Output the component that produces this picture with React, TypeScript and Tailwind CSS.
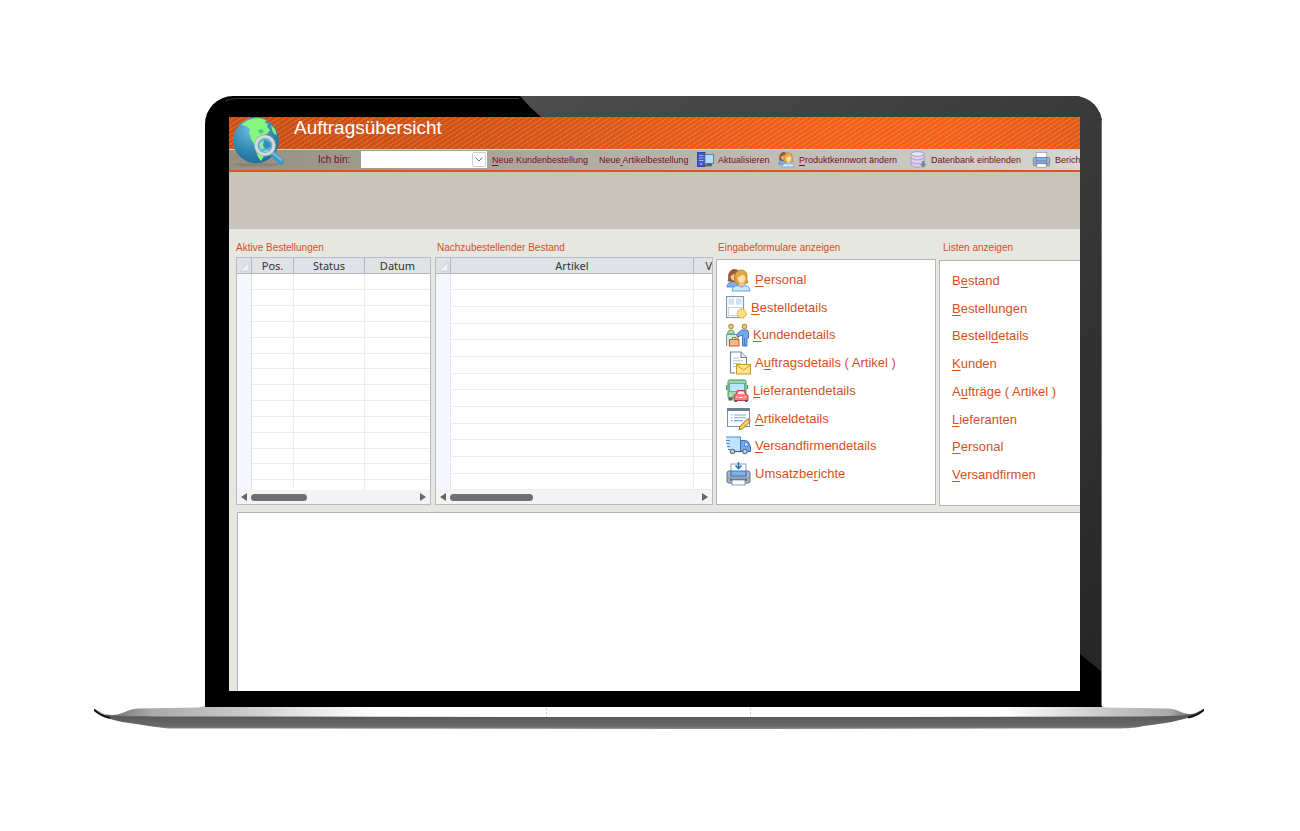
import type { ReactNode } from "react";

// Der unterstrichene Buchstabe steht zwischen zwei Tilden, z. B. "~P~ersonal"
function Hotkey({ text }: { text: string }) {
  const [before, key, after] = text.split("~");
  return (
    <span className="whitespace-pre">
      {before}
      <span className="underline underline-offset-2">{key}</span>
      {after}
    </span>
  );
}

/* ---------- Icons ---------- */

function GlobeIcon() {
  return (
    <svg viewBox="0 0 54 50" className="h-[50px] w-[54px]">
      <defs>
        <radialGradient id="sea" cx="0.4" cy="0.25" r="0.8">
          <stop offset="0" stopColor="#6cc0de" />
          <stop offset="0.6" stopColor="#3187b0" />
          <stop offset="1" stopColor="#1f6a94" />
        </radialGradient>
      </defs>
      <ellipse cx="26" cy="47.500" rx="25" ry="2" fill="#77776b" opacity="0.45" />
      <circle cx="25" cy="23.500" r="22.800" fill="url(#sea)" />
      <path
        d="M10 8 L17 3 L23 1.500 L29 1 L35 3 L34 6 L37 7 L36 10 L39 13 L36 17 L33 18 L31 21 L27 22 L25 24 L26 28 L23 27 L20 22 L18 16 L19 12 L15 9 Z"
        fill="#85f77e"
      />
      <path d="M40 8 L44 12 L46 18 L43 17 L41 13 Z" fill="#7ff08a" />
      <path d="M26 30 L31 34 L33 39 L30 44 L27 40 L25 34 Z" fill="#85f77e" />
      <path d="M27 13 l4 -1 l2 3 l-4 2 z" fill="#4fbf95" />
      <path d="M42 37 L50 45" stroke="#3b97c4" strokeWidth="6" strokeLinecap="round" />
      <path d="M42 36 L50 43" stroke="#73c3e6" strokeWidth="2" strokeLinecap="round" />
      <circle cx="34" cy="28.500" r="9" fill="#5fb0cf" stroke="#d5d9dc" strokeWidth="3.200" />
      <circle cx="34" cy="28.500" r="10.700" fill="none" stroke="#98a3a9" strokeWidth="0.600" />
      <path d="M28 27 q3 -4 7 -3 l-3 3 l1 4 l-3 2 z M32 34.500 l6 -2 l-2 3 z" fill="#8ce9a0" />
      <path d="M33 23 q6 1 7 6 l-4 3 l-4 -3 z" fill="#2e7fae" opacity="0.8" />
    </svg>
  );
}

function PeopleIcon({ className }: { className: string }) {
  return (
    <svg viewBox="0 0 25 24" className={className}>
      <path d="M1 19 q0 -5 6 -5.500 h5 v5.500 z" fill="#7fb0f2" stroke="#3f78c4" strokeWidth="0.800" />
      <path d="M2 13 Q3 10 2.500 7 Q4 1 9 1.500 Q14 2 14 8 L12 14 Z" fill="#9c5a3c" stroke="#74402a" strokeWidth="0.600" />
      <path d="M4.500 8 q3 -1 4 -3 v8 q-4 -1 -4 -5" fill="#f6c890" />
      <path d="M8.500 14 Q9.500 11 8.500 8 Q10 2 15.500 2 Q21 2.500 21 8 Q20.500 12 22 14.500 Q19 16.500 15.500 16.500 Q11 16.500 8.500 14 Z" fill="#e3ab45" stroke="#a8741c" strokeWidth="0.700" />
      <path d="M13 14 h5 v4 q-2.500 2 -5 0 z" fill="#f5c98d" />
      <path d="M11 9 Q15 8 16.500 6 Q18 8 20 8.500 Q20 15 15.500 15.500 Q11.500 15 11 9 Z" fill="#fde0ac" stroke="#c58a35" strokeWidth="0.600" />
      <path d="M6 23 q0 -5 6 -5.500 q3.500 3 7 0 q5 0.500 5 5.500 z" fill="#c5e8ff" stroke="#5b9bd0" strokeWidth="0.900" />
    </svg>
  );
}

function PrinterIcon({ className, arrow = false }: { className: string; arrow?: boolean }) {
  return (
    <svg viewBox="0 0 25 24" className={className}>
      <rect x="1" y="9" width="23" height="12" rx="2" fill="#a9b8c8" stroke="#5b7086" strokeWidth="1" />
      <path d="M1.500 16 h22" stroke="#6f8499" strokeWidth="0.800" />
      <rect x="5" y="2" width="15" height="12" fill="#fff" stroke="#8494a5" strokeWidth="0.900" />
      <rect x="5" y="9" width="15" height="5" fill="#7eb1f0" stroke="#3c6fb5" strokeWidth="0.900" />
      <rect x="4" y="17" width="17" height="2" fill="#51677d" />
      <rect x="6" y="18" width="13" height="5" fill="#fff" stroke="#8494a5" strokeWidth="0.900" />
      {arrow && <path d="M12.500 0 v6 M9.500 3.500 l3 3 l3 -3" fill="none" stroke="#2f6fc4" strokeWidth="1.600" />}
    </svg>
  );
}

function ComputerIcon() {
  return (
    <svg viewBox="0 0 17 15" className="h-[15px] w-[17px]">
      <rect x="0.500" y="0.500" width="7.500" height="14" fill="#4557c9" stroke="#3345ad" />
      <path d="M2 3.500 h4.500 M2 6 h4.500 M2 8.500 h4.500" stroke="#a9b7f5" strokeWidth="0.900" />
      <circle cx="4" cy="12" r="0.800" fill="#dfe5ff" />
      <rect x="8" y="2.500" width="8.500" height="9" fill="#b4dcfb" stroke="#5d83a3" />
      <path d="M10 12 h4 v1.500 h-6 v1" fill="none" stroke="#46606f" strokeWidth="1.500" />
    </svg>
  );
}

function DatabaseIcon() {
  return (
    <svg viewBox="0 0 17 17" className="h-[17px] w-[17px]">
      <path d="M1 3 v11 q6.500 4.500 13 0 v-11" fill="#ddd3f0" stroke="#a493c8" strokeWidth="0.900" />
      <ellipse cx="7.500" cy="3" rx="6.500" ry="2.300" fill="#ece5f9" stroke="#a493c8" strokeWidth="0.900" />
      <path d="M1 7 q6.500 4 13 0 M1 11 q6.500 4 13 0" fill="none" stroke="#a493c8" strokeWidth="0.900" />
      <path d="M12 10 h2.500 v3 h2 l-3.200 3.700 l-3.300 -3.700 h2 z" fill="#758797" />
    </svg>
  );
}

function FormIcon() {
  return (
    <svg viewBox="0 0 21 24" className="h-6 w-[21px]">
      <rect x="0.500" y="0.500" width="17" height="21" fill="#fff" stroke="#8295a8" strokeWidth="1.200" />
      <rect x="2.500" y="2.500" width="5.500" height="6" fill="#cfe0ee" />
      <rect x="10" y="2.500" width="5.500" height="6" fill="#cfe0ee" />
      <rect x="2.500" y="11.500" width="13" height="8" fill="#fff" stroke="#c3cdd7" strokeWidth="0.900" />
      <circle cx="15.800" cy="17.500" r="4.600" fill="#ffe07f" stroke="#cda23c" strokeWidth="1" strokeDasharray="1.500 0.700" />
    </svg>
  );
}

function CounterIcon() {
  return (
    <svg viewBox="0 0 23 24" className="h-6 w-[23px]">
      <circle cx="5" cy="3.500" r="2.400" fill="#f0bf70" stroke="#a87428" strokeWidth="0.800" />
      <path d="M1.500 11 q0 -4 3.500 -4 q3.500 0 3.500 4 z" fill="#a5dcae" stroke="#4f9a63" strokeWidth="0.800" />
      <path d="M0.500 23 V11.500 H12 V23" fill="#dfe8f1" stroke="#7b91a8" strokeWidth="1" />
      <circle cx="18.500" cy="3.500" r="2.400" fill="#f0bf70" stroke="#a87428" strokeWidth="0.800" />
      <path d="M10.500 11.500 l5 -4.500 h5 q2 0 2 3 v5 h-1.500 v8 h-4.500 v-11 l-5 2 z" fill="#76a8ec" stroke="#376fba" strokeWidth="0.900" />
      <path d="M18.500 15 v8" stroke="#376fba" strokeWidth="0.800" />
      <rect x="3.500" y="16.500" width="9.500" height="6.500" fill="#ffb48a" stroke="#c0602f" strokeWidth="1" />
      <path d="M6.500 16.500 v-2 h3.500 v2" fill="none" stroke="#c0602f" strokeWidth="1" />
    </svg>
  );
}

function MailDocIcon() {
  return (
    <svg viewBox="0 0 25 24" className="h-6 w-[25px]">
      <path d="M4.500 22 V1 H15 L20.500 6.500 V14" fill="#fff" stroke="#71859a" strokeWidth="1.100" />
      <path d="M4.500 22 H10 V14 H20" fill="#fff" />
      <path d="M4.500 22 H9" stroke="#71859a" strokeWidth="1.100" />
      <path d="M15 1 V6.500 H20.500" fill="#e8eef5" stroke="#71859a" strokeWidth="1.100" />
      <path d="M7 7 h6 M7 9.800 h10 M7 12.500 h8 M7 15.500 h3" stroke="#b7c4d2" strokeWidth="1" />
      <rect x="10.500" y="13.500" width="14" height="9.500" fill="#ffe48e" stroke="#c99a2b" strokeWidth="1" />
      <path d="M10.500 14 l7 5 l7 -5" fill="none" stroke="#c99a2b" strokeWidth="1" />
    </svg>
  );
}

function BusIcon() {
  return (
    <svg viewBox="0 0 23 24" className="h-6 w-[23px]">
      <rect x="2" y="1" width="18" height="18" rx="1.500" fill="#9ed7a8" stroke="#45935c" strokeWidth="1" />
      <path d="M0.700 6 v5 M21.500 6 v4" stroke="#45935c" strokeWidth="1.300" />
      <rect x="3.500" y="4.500" width="15" height="8" fill="#b9e6fb" stroke="#58a0a0" strokeWidth="0.800" />
      <rect x="2.500" y="18.500" width="4" height="3" fill="#4e6275" />
      <circle cx="4.500" cy="16" r="1" fill="#fff5b8" />
      <path d="M8 21.500 v-5 q1 -1 2 -1 l1.500 -4 h7 l1.500 4 q1.500 0 2 1 v5 z" fill="#f47f7f" stroke="#bb3d42" strokeWidth="1" />
      <path d="M11.500 15 l1 -2.500 h5 l1 2.500 z" fill="#fbe3e6" />
      <path d="M8.500 22 h2.500 M19 22 h2.500" stroke="#48596a" strokeWidth="2" />
      <path d="M10 18 h1.500 M18.500 18 h1.500 M13 18.500 h4" stroke="#fff" strokeWidth="1" />
    </svg>
  );
}

function NoteIcon() {
  return (
    <svg viewBox="0 0 25 24" className="h-6 w-[25px]">
      <rect x="1.500" y="1.500" width="22" height="18" fill="#fff" stroke="#7d90a4" strokeWidth="1" />
      <rect x="1" y="1" width="23" height="3" fill="#6c8095" />
      <path d="M5 8 h1.500 M5 10.800 h1.500 M5 13.600 h1.500" stroke="#79a9e8" strokeWidth="1.100" />
      <path d="M8 8 h12 M8 10.800 h12 M8 13.600 h9" stroke="#79a9e8" strokeWidth="1.100" />
      <path d="M13 23 l1.200 -4 l7.300 -7 l2.600 2.600 l-7.300 7 z" fill="#f8cf63" stroke="#8d6a24" strokeWidth="0.900" />
      <path d="M21.500 12 l1.300 -1.200 l2 2.300 l-0.700 1.500 z" fill="#e77b83" />
    </svg>
  );
}

function TruckIcon() {
  return (
    <svg viewBox="0 0 25 24" className="h-6 w-[25px]">
      <path d="M0 3 h14.500 v14 H4 L2 14 Z" fill="#bfe4ff" />
      <path d="M0 3 h14.500 v14 M0 6.500 h4 M0 9.500 h3.500 M1 12.500 h3 M2 15.500 h2" fill="none" stroke="#4b8ed6" strokeWidth="1" />
      <path d="M14.500 6.500 h5 q3 0 4 4 l1 2 v5 h-10 z" fill="#76aaf0" stroke="#376fba" strokeWidth="1" />
      <path d="M18.500 8.500 h2 q1.500 1 2 3.500 h-4 z" fill="#d6efff" stroke="#376fba" strokeWidth="0.700" />
      <path d="M4 17.500 h20" stroke="#46607a" strokeWidth="1.200" />
      <circle cx="6.500" cy="17.500" r="2.200" fill="#c4d0dc" stroke="#5b7188" strokeWidth="1.100" />
      <circle cx="19" cy="17.500" r="2.200" fill="#c4d0dc" stroke="#5b7188" strokeWidth="1.100" />
    </svg>
  );
}

/* ---------- Daten ---------- */

const forms: { label: string; icon: ReactNode }[] = [
  { label: "~P~ersonal", icon: <PeopleIcon className="h-6 w-[25px]" /> },
  { label: "~B~estelldetails", icon: <FormIcon /> },
  { label: "~K~undendetails", icon: <CounterIcon /> },
  { label: "A~u~ftragsdetails ( Artikel )", icon: <MailDocIcon /> },
  { label: "~L~ieferantendetails", icon: <BusIcon /> },
  { label: "~A~rtikeldetails", icon: <NoteIcon /> },
  { label: "~V~ersandfirmendetails", icon: <TruckIcon /> },
  { label: "Umsatzbe~r~ichte", icon: <PrinterIcon arrow className="h-6 w-[25px]" /> },
];

const lists = [
  "B~e~stand",
  "~B~estellungen",
  "Bestell~d~etails",
  "~K~unden",
  "A~u~fträge ( Artikel )",
  "~L~ieferanten",
  "~P~ersonal",
  "~V~ersandfirmen",
];

const toolbar: { label: string; width: string; icon?: ReactNode }[] = [
  { label: "~N~eue Kundenbestellung", width: "w-[107px]" },
  { label: "Neue~ ~Artikelbestellung", width: "w-[98px]" },
  { label: "Aktualisieren", width: "w-[81px]", icon: <ComputerIcon /> },
  {
    label: "~P~roduktkennwort ändern",
    width: "w-[132px]",
    icon: <PeopleIcon className="h-[17px] w-[17px]" />,
  },
  { label: "Datenbank einblenden", width: "w-[122px]", icon: <DatabaseIcon /> },
  { label: "Bericht", width: "w-[80px]", icon: <PrinterIcon className="h-[17px] w-[19px]" /> },
];

/* ---------- Tabellen ---------- */

interface DataGridProps {
  columns: { name: string; width: string }[];
  rowHeights: string[];
  thumb: string;
}

function DataGrid({ columns, rowHeights, thumb }: DataGridProps) {
  return (
    <div className="flex h-[248px] flex-col overflow-hidden border border-[#b9bac4] bg-white">
      <div className="flex-1 overflow-hidden">
        <table className="w-full table-fixed border-separate border-spacing-0">
          <thead>
            <tr className="h-4 bg-[#dfe2e7]">
              <th className="w-[15px] border-r border-b border-[#b4b6bf] p-0">
                <svg viewBox="0 0 14 14" className="ml-px h-[14px] w-[14px]">
                  <path d="M2 12 L11 3 V12 Z" fill="#eef1f6" stroke="#c2cbd8" strokeWidth="0.800" />
                </svg>
              </th>
              {columns.map((c) => (
                <th
                  key={c.name}
                  className={`${c.width} overflow-hidden border-r border-b border-[#b4b6bf] p-0 font-['Noto_Sans',sans-serif] text-[11px] leading-[15px] font-normal text-[#333] last:border-r-0`}
                >
                  {c.name}
                </th>
              ))}
            </tr>
          </thead>
          <tbody>
            {rowHeights.map((h, i) => (
              <tr key={i} className={h}>
                <td className="border-r border-[#e3e4ea] bg-[#f6f7fe] p-0" />
                {columns.map((c) => (
                  <td key={c.name} className="border-r border-b border-[#ececec] p-0 last:border-r-0" />
                ))}
              </tr>
            ))}
          </tbody>
        </table>
      </div>
      <div className="flex h-[14px] shrink-0 items-center justify-between bg-[#f3f3f3] px-1">
        <button type="button" aria-label="Nach links">
          <svg viewBox="0 0 6 8" className="h-2 w-[6px]">
            <path d="M6 0 V8 L0 4 Z" fill="#666" />
          </svg>
        </button>
        <div className="flex-1 px-1">
          <div className={`h-[7px] rounded-full bg-[#717171] ${thumb}`} />
        </div>
        <button type="button" aria-label="Nach rechts">
          <svg viewBox="0 0 6 8" className="h-2 w-[6px]">
            <path d="M0 0 V8 L6 4 Z" fill="#666" />
          </svg>
        </button>
      </div>
    </div>
  );
}

const orderRows = Array.from({ length: 14 }, (_, i) => (i % 6 === 5 ? "h-[15px]" : "h-4"));
const stockRows = Array.from({ length: 13 }, (_, i) => (i % 3 === 0 ? "h-4" : "h-[17px]"));

function SectionTitle({ children, indent = "" }: { children: ReactNode; indent?: string }) {
  return <h2 className={`mb-[2px] text-[10px] leading-[14px] text-[#d5501e] ${indent}`}>{children}</h2>;
}

/* ---------- Anwendung ---------- */

function OrderOverview() {
  return (
    <div className="relative overflow-hidden bg-[#e6e7e1] font-['Liberation_Sans',Arial,sans-serif]">
      <header className="relative">
        <div className="bg-[repeating-linear-gradient(147deg,transparent_0px,transparent_3px,rgba(255,255,255,0.16)_3px,rgba(255,255,255,0.16)_4px),linear-gradient(90deg,#cc4f13_0%,#cf5114_25%,#f4611b_70%,#f4611b_85%,#e45a18_100%)]">
          <h1 className="h-8 pl-[65px] text-[19px] leading-[22px] whitespace-nowrap text-white">
            Auftragsübersicht
          </h1>
        </div>
        <div className="flex h-[23px] items-center border-t border-b-2 border-t-[#d8cfc0] border-b-[#d5581c] bg-linear-to-r from-[#959080] to-[#d6d6d2] pb-px pl-[89px] text-[#7d0a2c]">
          <label htmlFor="employee" className="w-[43px] shrink-0 text-[10px]">
            Ich bin:
          </label>
          <div className="relative mr-[5px] h-[17px] w-[126px] shrink-0">
            <select
              id="employee"
              className="block h-full w-full appearance-none bg-white text-[10px] outline-none"
            />
            <span className="pointer-events-none absolute top-px right-px flex h-[15px] w-[14px] items-center justify-center rounded-xs border border-[#cfcfcf] bg-white">
              <svg viewBox="0 0 8 5" className="h-[5px] w-2">
                <path d="M0.500 0.500 L4 4 L7.500 0.500" fill="none" stroke="#777" strokeWidth="1" />
              </svg>
            </span>
          </div>
          {toolbar.map((t) => (
            <button
              key={t.label}
              type="button"
              className={`${t.width} flex shrink-0 items-center gap-1 text-left text-[9px] leading-3`}
            >
              {t.icon}
              <Hotkey text={t.label} />
            </button>
          ))}
        </div>
        <div className="absolute top-0 left-[2px]">
          <GlobeIcon />
        </div>
      </header>

      <div className="h-[57px] bg-[#c8c4bc]" />

      <main className="pt-3 pl-[7px]">
        <div className="flex items-start">
          <section className="mr-1 w-[195px] shrink-0">
            <SectionTitle>Aktive Bestellungen</SectionTitle>
            <DataGrid
              columns={[
                { name: "Pos.", width: "w-[42px]" },
                { name: "Status", width: "w-[71px]" },
                { name: "Datum", width: "w-auto" },
              ]}
              rowHeights={orderRows}
              thumb="w-[56px]"
            />
          </section>

          <section className="mr-[3px] w-[278px] shrink-0">
            <SectionTitle indent="pl-[2px]">Nachzubestellender Bestand</SectionTitle>
            <DataGrid
              columns={[
                { name: "Artikel", width: "w-[243px]" },
                { name: "V", width: "w-auto text-right" },
              ]}
              rowHeights={stockRows}
              thumb="w-[83px]"
            />
          </section>

          <section className="mr-[3px] w-[220px] shrink-0">
            <SectionTitle indent="pl-[2px]">Eingabeformulare anzeigen</SectionTitle>
            <nav className="mt-1 h-[246px] border border-[#b3b4ba] bg-white pt-[6px] pl-[9px]">
              <ul className="grid h-[222px] grid-rows-8">
                {forms.map((f) => (
                  <li key={f.label} className="flex items-center">
                    <a href="#" className="flex items-center gap-1 text-[13px] leading-4 text-[#d5501e]">
                      {f.icon}
                      <Hotkey text={f.label} />
                    </a>
                  </li>
                ))}
              </ul>
            </nav>
          </section>

          <section className="w-[220px] shrink-0">
            <SectionTitle indent="pl-1">Listen anzeigen</SectionTitle>
            <nav className="mt-[5px] h-[246px] border border-[#b3b4ba] bg-white pt-[6px] pl-3">
              <ul className="grid h-[222px] grid-rows-8">
                {lists.map((l) => (
                  <li key={l} className="flex items-center">
                    <a href="#" className="text-[13px] leading-4 text-[#d5501e]">
                      <Hotkey text={l} />
                    </a>
                  </li>
                ))}
              </ul>
            </nav>
          </section>
        </div>
        <div className="mt-[6px] ml-px h-[179px] border-t border-l border-[#b3b4ba] bg-white" />
      </main>
    </div>
  );
}

function LaptopBase() {
  return (
    <svg viewBox="0 0 1110 24" preserveAspectRatio="none" className="relative -mt-px block h-6 w-full">
      <defs>
        <linearGradient id="deck" x1="0" x2="1" y1="0" y2="0">
          <stop offset="0" stopColor="#555" />
          <stop offset="0.050" stopColor="#a8a8a8" />
          <stop offset="0.130" stopColor="#c9c9c9" />
          <stop offset="0.250" stopColor="#fff" />
          <stop offset="0.820" stopColor="#fff" />
          <stop offset="0.920" stopColor="#c4c4c4" />
          <stop offset="0.970" stopColor="#a8a8a8" />
          <stop offset="1" stopColor="#444" />
        </linearGradient>
        <linearGradient id="under" x1="0" x2="0" y1="0" y2="1">
          <stop offset="0" stopColor="#55555a" />
          <stop offset="0.800" stopColor="#6a6869" />
          <stop offset="1" stopColor="#8a8a8a" />
        </linearGradient>
      </defs>
      <path
        d="M0 4 C5 4 8 9 18 9 C30 9 32 3 44 2.500 L104 1.500 L112 0 L1007 0 L1012 1.500 L1074 2.500 C1084 3 1088 8 1096 8 C1103 8 1105 4 1110 4 L1096 12 L20 12 Z"
        fill="url(#deck)"
      />
      <path
        d="M6 8 C20 11 40 10 60 10.500 L500 11 L800 11 L1050 10.500 C1075 10 1090 10 1104 8 C1090 15 1065 18 1050 20 C1040 22 1035 22.500 1015 22.500 L600 23 L75 22.500 C60 21 50 19 35 17 C20 15 12 12 6 8 Z"
        fill="url(#under)"
      />
      <path d="M0 3.500 Q5 9 16 12 M1110 3.500 Q1105 9 1094 11.500" fill="none" stroke="#161616" strokeWidth="2" />
      <path d="M111 0.500 H1008" stroke="#000" strokeWidth="1" />
      <path d="M452.500 2 V11 M656.500 2 V11" stroke="#ccc" strokeWidth="1" strokeDasharray="2 2" />
    </svg>
  );
}

export default function App() {
  return (
    <div className="min-h-screen bg-white pt-24 pr-24 pb-24 pl-[94px]">
      <div className="relative mr-[102px] ml-[111px] overflow-hidden rounded-t-[28px] bg-black pt-[21px] pr-[22px] pb-4 pl-6">
        {/* Lichtreflex auf dem Rahmen */}
        <svg
          viewBox="0 0 897 611"
          preserveAspectRatio="none"
          className="absolute inset-0 h-full w-full"
          aria-hidden="true"
        >
          <defs>
            <linearGradient id="shine" x1="0" x2="1" y1="0" y2="1">
              <stop offset="0" stopColor="#4d4d4d" />
              <stop offset="0.600" stopColor="#363636" />
              <stop offset="1" stopColor="#262626" />
            </linearGradient>
          </defs>
          <path d="M315 0 H897 V576 L875 558 L336 21 Q325 12 315 0 Z" fill="url(#shine)" />
          <path d="M20 5 Q26 2 40 2.500 H314" fill="none" stroke="#3a3a3a" strokeWidth="1" />
          <path d="M896.500 24 V611" stroke="#77777a" strokeWidth="1" />
        </svg>
        <OrderOverview />
      </div>
      <LaptopBase />
    </div>
  );
}
